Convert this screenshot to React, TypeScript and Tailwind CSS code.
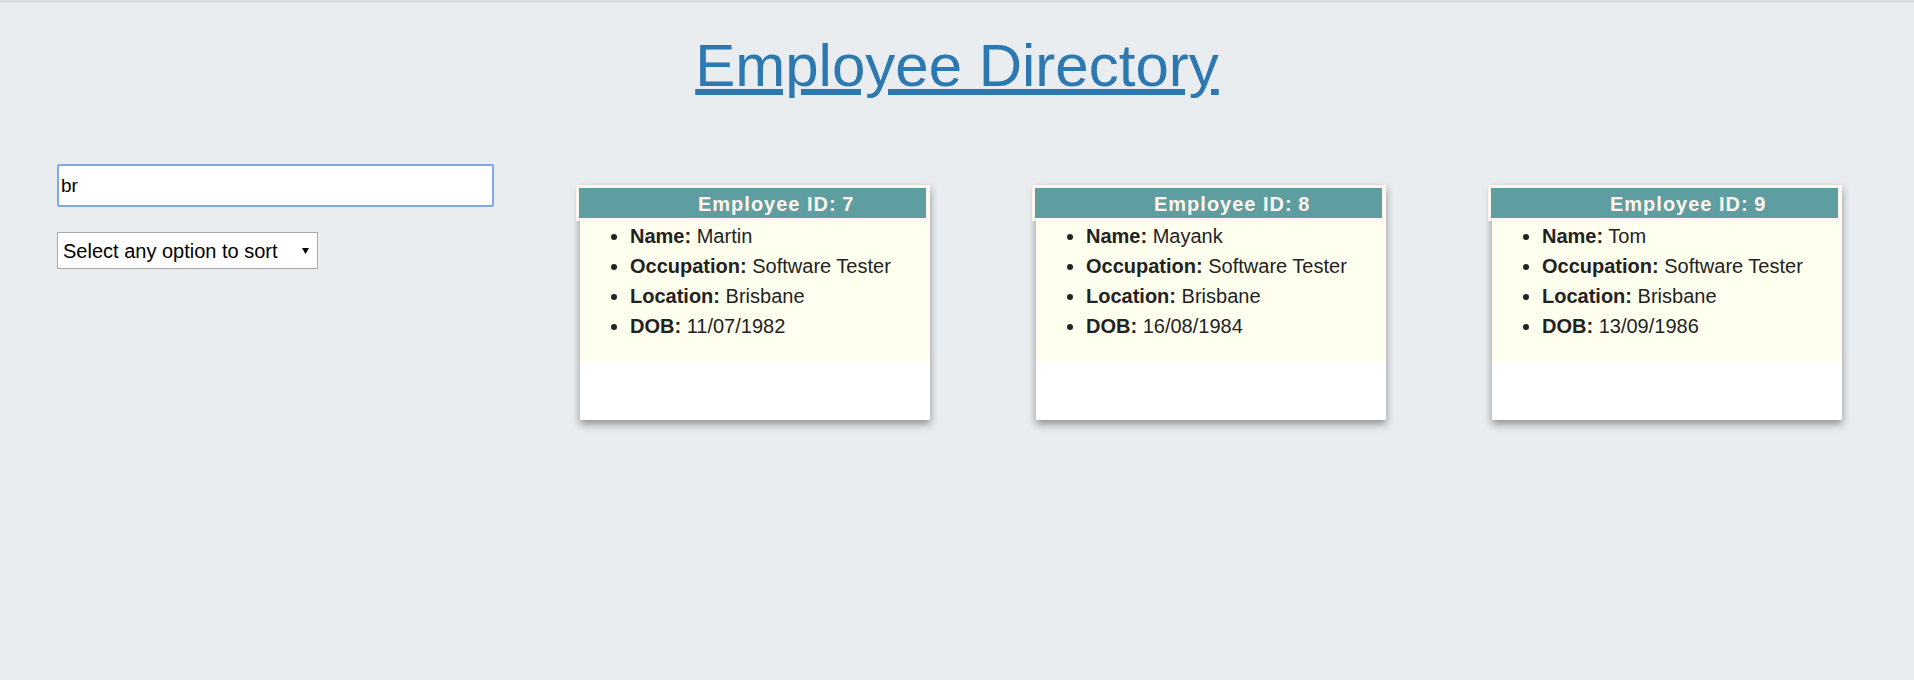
import { useState } from "react";

interface Employee {
  id: number;
  name: string;
  occupation: string;
  location: string;
  dob: string;
}

const EMPLOYEES: Employee[] = [
  { id: 7, name: "Martin", occupation: "Software Tester", location: "Brisbane", dob: "11/07/1982" },
  { id: 8, name: "Mayank", occupation: "Software Tester", location: "Brisbane", dob: "16/08/1984" },
  { id: 9, name: "Tom", occupation: "Software Tester", location: "Brisbane", dob: "13/09/1986" },
];

function EmployeeCard({ emp }: { emp: Employee }) {
  return (
    <div className="mx-auto w-[350px] h-[235px] bg-white shadow-[0_4px_8px_0_rgba(0,0,0,0.4)]">
      <div className="-ml-[4px] w-[353px] h-[36px] border-[3px] border-[#fff5ee] bg-[#5f9ea0] pl-[119px] text-[20px] leading-[32px] text-[#fff5ee] font-bold">
        <span className="tracking-[1px]">Employee ID:</span> {emp.id}
      </div>
      <ul className="list-disc bg-[#fffff0] pl-[50px] pb-[21px] text-[20px] leading-[30px] text-[#222]">
        <li>
          <b>Name:</b> {emp.name}
        </li>
        <li>
          <b>Occupation:</b> {emp.occupation}
        </li>
        <li>
          <b>Location:</b> {emp.location}
        </li>
        <li>
          <b>DOB:</b> {emp.dob}
        </li>
      </ul>
    </div>
  );
}

export default function App() {
  const [query, setQuery] = useState("br");
  const [sort, setSort] = useState("");

  return (
    <div className="min-h-screen bg-[#e9edf0] border-t-[3px] border-[#dadbdc] font-['Liberation_Sans',Arial,sans-serif] text-[#222]">
      <h1 className="pt-[28px] text-center text-[60px] leading-[69px] font-normal">
        <a href="#" className="text-[#2c78b1] underline">
          Employee Directory
        </a>
      </h1>

      <div className="flex mt-[64px]">
        <div className="w-[527px] shrink-0 pl-[57px] flex flex-col items-start">
          <input
            value={query}
            onChange={(e) => setQuery(e.target.value)}
            autoFocus
            className="w-[437px] h-[43px] bg-white border-2 border-[#7fa8e9] rounded-[2px] px-[2px] text-[19px] text-black outline-none caret-black"
          />
          <div className="relative mt-[25px] w-[261px] h-[37px]">
            <select
              value={sort}
              onChange={(e) => setSort(e.target.value)}
              className="appearance-none w-full h-full bg-white border border-[#a9a9a9] pl-[5px] text-[20px] text-black outline-none"
            >
              <option value="">Select any option to sort</option>
              <option value="name">Name</option>
              <option value="dob">DOB</option>
            </select>
            <svg
              className="pointer-events-none absolute right-[9px] top-[16px]"
              width="7"
              height="6"
              viewBox="0 0 7 6"
            >
              <path d="M0 0h7L3.5 6z" fill="#000" />
            </svg>
          </div>
        </div>

        <div className="grid grid-cols-3 w-[1368px] pt-[21px]">
          {EMPLOYEES.map((emp) => (
            <EmployeeCard key={emp.id} emp={emp} />
          ))}
        </div>
      </div>
    </div>
  );
}
